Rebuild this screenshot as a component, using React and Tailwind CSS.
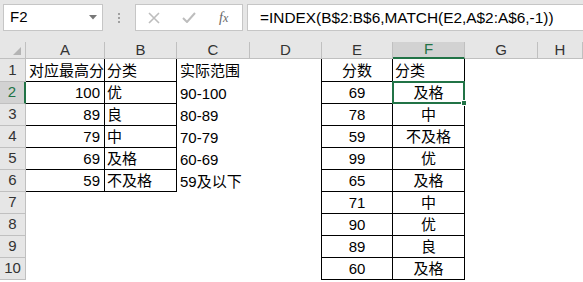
import React from 'react';

const letters = ['A', 'B', 'C', 'D', 'E', 'F', 'G', 'H'];

// [A, B, C, E, F]
const rows = [
    ['对应最高分', '分类', '实际范围', '分数', '分类'],
    ['100', '优', '90-100', '69', '及格'],
    ['89', '良', '80-89', '78', '中'],
    ['79', '中', '70-79', '59', '不及格'],
    ['69', '及格', '60-69', '99', '优'],
    ['59', '不及格', '59及以下', '65', '及格'],
    ['', '', '', '71', '中'],
    ['', '', '', '90', '优'],
    ['', '', '', '89', '良'],
    ['', '', '', '60', '及格'],
];

function Cell({ className = '', children }) {
    return (
        <div className={`flex items-center overflow-visible whitespace-nowrap text-[15px] leading-none text-black ${className}`}>
            {children}
        </div>
    );
}

function ColHeader({ letter }) {
    if (letter === 'F') {
        return (
            <div className="flex items-center justify-center bg-[#d2d2d2] border-r border-r-[#c0c0c0] border-b-2 border-b-[#217346] text-[15px] text-[#217346]">
                {letter}
            </div>
        );
    }
    return (
        <div className="flex items-center justify-center bg-[#e6e6e6] border-r border-b border-[#c0c0c0] text-[15px] text-[#333]">
            {letter}
        </div>
    );
}

function RowHeader({ n }) {
    if (n === 2) {
        return (
            <div className="flex items-center justify-center bg-[#d2d2d2] border-r-2 border-r-[#217346] border-b border-b-[#c0c0c0] text-[15px] text-[#217346]">
                {n}
            </div>
        );
    }
    return (
        <div className="flex items-center justify-center bg-[#e6e6e6] border-r border-b border-[#c0c0c0] text-[15px] text-[#333]">
            {n}
        </div>
    );
}

export default function App() {
    return (
        <div className="w-[583px] h-[282px] overflow-hidden bg-white font-['Liberation_Sans','Noto_Sans_CJK_SC',sans-serif]">
            {/* formula bar */}
            <div className="h-[42px] bg-[#e6e6e6] flex items-start pt-[4px] pl-[3px]">
                <div className="w-[100px] h-[27px] bg-white border border-[#c6c6c6] flex items-center justify-between pl-[6px] pr-[5px]">
                    <span className="text-[15px] text-black">F2</span>
                    <svg width="8" height="5" viewBox="0 0 8 5"><path d="M0 0h8L4 4.5z" fill="#777" /></svg>
                </div>
                <div className="w-[32px] h-[27px] flex flex-col items-center justify-center gap-[2px]">
                    <span className="w-[2px] h-[2px] bg-[#a0a0a0]" />
                    <span className="w-[2px] h-[2px] bg-[#a0a0a0]" />
                    <span className="w-[2px] h-[2px] bg-[#a0a0a0]" />
                </div>
                <div className="w-[108px] h-[27px] bg-white border border-[#c6c6c6] flex items-center pl-[12px]">
                    <svg width="12" height="12" viewBox="0 0 12 12"><path d="M1 1l10 10M11 1L1 11" stroke="#bdbdbd" strokeWidth="1.6" /></svg>
                    <svg className="ml-[22px]" width="14" height="11" viewBox="0 0 14 11"><path d="M1 6l4 4 8-9" stroke="#bdbdbd" strokeWidth="2" fill="none" /></svg>
                    <span className="ml-[23px] text-[14px] italic text-[#666] font-['Liberation_Serif',serif]">f<span className="text-[12px]">x</span></span>
                </div>
                <div className="ml-[4px] flex-1 h-[27px] bg-white border border-[#c6c6c6] border-r-0 flex items-center pl-[12px]">
                    <span className="text-[15.4px] text-black whitespace-nowrap">=INDEX(B$2:B$6,MATCH(E2,A$2:A$6,-1))</span>
                </div>
            </div>

            {/* sheet */}
            <div className="grid grid-cols-[26px_79px_72px_73px_72px_71px_72px_73px_1fr] grid-rows-[17px_23px_22px_22px_22px_22px_22px_22px_22px_22px_22px]">
                <div className="bg-[#e6e6e6] border-r border-b border-[#c0c0c0] flex items-end justify-end pr-[4px] pb-[3px]">
                    <svg width="8" height="8" viewBox="0 0 8 8"><path d="M8 0v8H0z" fill="#b4b4b4" /></svg>
                </div>
                {letters.map((l) => <ColHeader key={l} letter={l} />)}

                {rows.map((r, i) => {
                    const n = i + 1;
                    const inLeft = n <= 6;
                    const first = n === 1;
                    return (
                        <React.Fragment key={n}>
                            <RowHeader n={n} />
                            <Cell className={inLeft ? (first ? 'border-r border-b border-black pl-[3px]' : 'border-r border-b border-black justify-end pr-[4px]') : ''}>
                                {r[0]}
                            </Cell>
                            <Cell className={inLeft ? 'border-r border-b border-black pl-[2px]' : ''}>{r[1]}</Cell>
                            <Cell className="pl-[3px]">{r[2]}</Cell>
                            <Cell className="border-r border-black" />
                            <Cell className="border-r border-b border-black justify-center">{r[3]}</Cell>
                            {n === 2 ? (
                                <div className="relative flex items-center justify-center border-r border-b border-black text-[15px] leading-none text-black">
                                    {r[4]}
                                    <div className="absolute -left-[1px] -top-[1px] -right-[1px] -bottom-[1px] border-2 border-[#217346]" />
                                    <div className="absolute -right-[3px] -bottom-[3px] w-[6px] h-[6px] bg-[#217346] border border-white" />
                                </div>
                            ) : (
                                <Cell className={first ? 'border-r border-b border-black pl-[2px]' : 'border-r border-b border-black justify-center'}>{r[4]}</Cell>
                            )}
                            <Cell />
                            <Cell />
                        </React.Fragment>
                    );
                })}
            </div>
        </div>
    );
}
